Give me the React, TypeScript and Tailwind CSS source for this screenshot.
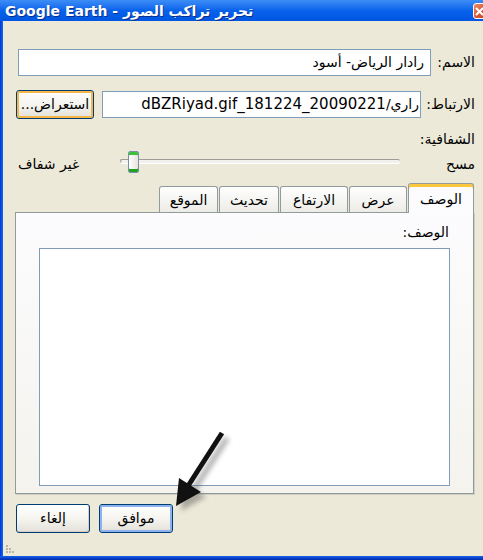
import React from 'react';

const font = { fontFamily: '"DejaVu Sans", "Noto Sans", sans-serif' };

function XpButton({ label, ring, width = 'w-[78px]' }: { label: string; ring?: 'orange' | 'blue'; width?: string }) {
  const inner =
    ring === 'orange'
      ? 'shadow-[inset_0_0_0_2px_#F6B74A]'
      : ring === 'blue'
      ? 'shadow-[inset_0_0_0_2px_#8DB2F0]'
      : 'shadow-[inset_-1px_-1px_0_#D6D0C5]';
  return (
    <div
      className={`h-[29px] ${width} flex items-center justify-center rounded-[3px] border border-[#003C74] bg-gradient-to-b from-[#FFFFFF] via-[#F5F4EF] to-[#E3E1D9] text-[14px] text-black ${inner}`}
    >
      {label}
    </div>
  );
}

function Tab({ label, width, active }: { label: string; width: string; active?: boolean }) {
  if (active) {
    return (
      <div
        className={`relative z-10 h-[30px] ${width} flex items-center justify-center pt-[2px] border border-b-0 border-[#919B9C] rounded-t-[3px] bg-[#FCFCFE] text-[14px] shadow-[inset_0_3px_0_#FFC83C]`}
      >
        {label}
      </div>
    );
  }
  return (
    <div
      className={`h-[27px] ${width} flex items-center justify-center border border-b-0 border-[#919B9C] rounded-t-[3px] bg-gradient-to-b from-[#FFFFFF] to-[#ECEBE6] text-[14px]`}
    >
      {label}
    </div>
  );
}

export default function App() {
  return (
    <div className="relative w-[483px] h-[560px] overflow-hidden flex flex-col bg-[#0054E3]" style={font}>
      {/* Title bar */}
      <div className="relative h-[21px] shrink-0 bg-gradient-to-b from-[#3C8DF6] via-[#0862EA] to-[#0056E2] flex items-center pl-[5px]">
        <span className="text-white font-bold text-[14px] leading-none whitespace-nowrap [text-shadow:1px_1px_0_#0A2F8A]">
          Google Earth - تحرير تراكب الصور
        </span>
        <div className="absolute left-[473px] top-[3px] w-[17px] h-[16px] rounded-[3px] border border-white bg-gradient-to-br from-[#EA8C6C] via-[#D85A36] to-[#C23A1A] flex items-center justify-start pl-[1px]">
          <svg width="9" height="9" viewBox="0 0 9 9">
            <path d="M1 1 L8 8 M8 1 L1 8" stroke="white" strokeWidth="2" />
          </svg>
        </div>
      </div>

      {/* Window frame */}
      <div className="flex-1 flex min-h-0">
        <div className="w-[3px] shrink-0 bg-gradient-to-r from-[#0831D9] to-[#166AEE]" />
        <div dir="rtl" className="relative flex-1 bg-[#ECE9D8] flex flex-col pr-[8px] pl-[12px] text-black">
          {/* Name */}
          <div className="mt-[28px] flex items-center">
            <div className="w-[44px] text-[14px] whitespace-nowrap">الاسم:</div>
            <div className="flex-1 h-[27px] border border-[#7F9DB9] bg-white flex items-center px-[6px] text-[14px] ml-[3px]">
              رادار الرياض- أسود
            </div>
          </div>

          {/* Link */}
          <div className="mt-[14px] flex items-center">
            <div className="w-[54px] text-[14px] whitespace-nowrap">الارتباط:</div>
            <div className="w-[319px] h-[27px] border border-[#7F9DB9] bg-white flex items-center justify-start overflow-hidden text-[14px] pr-[1px]">
              <span className="whitespace-nowrap">
                راري/<span className="text-[15px]">20090221_181224_dBZRiyad.gif</span>
              </span>
            </div>
            <div className="flex-1" />
            <div className="ml-[1px]">
              <XpButton label="استعراض..." ring="orange" />
            </div>
          </div>

          {/* Transparency */}
          <div className="mt-[11px] text-[14px] leading-[18px]">الشفافية:</div>
          <div className="mt-[2px] flex items-center h-[24px]">
            <div className="w-[75px] text-[14px] pt-[5px]">مسح</div>
            <div className="relative w-[280px] h-[24px]">
              <div className="absolute left-0 right-0 top-[9px] h-[4px] rounded-full border-t border-l border-[#9D9C99] bg-[#F2F1EC] shadow-[0_1px_0_#FFFFFF]" />
              <div className="absolute left-[8px] top-[1px] w-[11px] h-[22px] rounded-[2px] border border-[#7B8FA8] bg-gradient-to-r from-[#FFFFFF] to-[#E6E4DC] shadow-[inset_0_3px_0_#3BC23B,inset_0_-3px_0_#21A121]" />
            </div>
            <div className="flex-1 text-left text-[14px] pt-[5px] pl-[3px] whitespace-nowrap">غير شفاف</div>
          </div>

          {/* Tabs */}
          <div className="mt-[9px] h-[30px] flex items-end gap-[1px] pr-[1px]">
            <Tab label="الوصف" width="w-[66px]" active />
            <Tab label="عرض" width="w-[58px]" />
            <Tab label="الارتفاع" width="w-[68px]" />
            <Tab label="تحديث" width="w-[60px]" />
            <Tab label="الموقع" width="w-[59px]" />
          </div>
          <div className="-mt-[1px] h-[282px] mr-[1px] border border-[#919B9C] bg-gradient-to-b from-[#FCFCFE] to-[#F4F3EE] shadow-[1px_1px_0_#D0CEBF] flex flex-col px-[23px]">
            <div className="mt-[10px] text-[14px] leading-[18px] pr-[1px]">الوصف:</div>
            <div className="mt-[7px] h-[238px] border border-[#7F9DB9] bg-white" />
          </div>

          {/* Buttons */}
          <div dir="ltr" className="mt-[10px] flex gap-[9px] pl-[1px]">
            <XpButton label="إلغاء" width="w-[74px]" />
            <XpButton label="موافق" ring="blue" width="w-[74px]" />
          </div>

          {/* Resize grip */}
          <div className="absolute left-[3px] bottom-[3px] grid grid-cols-3 gap-[1px]">
            <span className="w-[2px] h-[2px]" />
            <span className="w-[2px] h-[2px]" />
            <span className="w-[2px] h-[2px] bg-[#B9B5A3]" />
            <span className="w-[2px] h-[2px]" />
            <span className="w-[2px] h-[2px] bg-[#B9B5A3]" />
            <span className="w-[2px] h-[2px] bg-[#B9B5A3]" />
            <span className="w-[2px] h-[2px] bg-[#B9B5A3]" />
            <span className="w-[2px] h-[2px] bg-[#B9B5A3]" />
            <span className="w-[2px] h-[2px] bg-[#B9B5A3]" />
          </div>
        </div>
      </div>
      <div className="h-[4px] shrink-0 bg-gradient-to-b from-[#1A5FE8] to-[#0029B0]" />

      {/* Annotation arrow */}
      <svg className="absolute inset-0 pointer-events-none" width="483" height="560" viewBox="0 0 483 560">
        <defs>
          <filter id="blur" x="-50%" y="-50%" width="200%" height="200%">
            <feGaussianBlur stdDeviation="2.5" />
          </filter>
        </defs>
        <g transform="translate(5 5)" opacity="0.45" filter="url(#blur)">
          <line x1="222" y1="433" x2="188" y2="486" stroke="#555" strokeWidth="6" />
          <polygon points="176,506 179,478 201,492" fill="#555" />
        </g>
        <line x1="222" y1="433" x2="188" y2="486" stroke="#111" strokeWidth="5" />
        <polygon points="176,506 179,478 201,492" fill="#111" />
      </svg>
    </div>
  );
}
